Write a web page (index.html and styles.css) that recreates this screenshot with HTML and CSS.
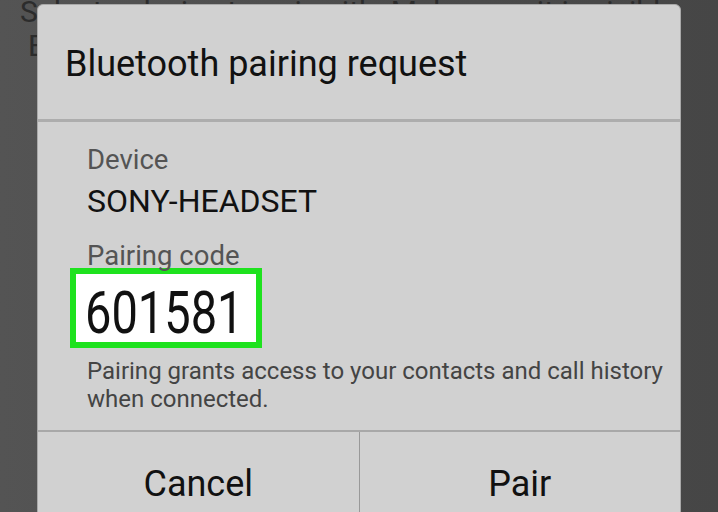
FILE: index.html
```html
<!DOCTYPE html>
<html>
<head>
<meta charset="utf-8">
<link rel="stylesheet" href="styles.css">
</head>
<body>
<div class="screen">
  <div class="backdrop-text">
    <p>Select a device to pair with. Make sure it is visible</p>
    <p>Eligible devices nearby will appear below</p>
  </div>
  <div class="dialog">
    <div class="dialog-header">
      <h1 class="dialog-title">Bluetooth pairing request</h1>
    </div>
    <div class="dialog-body">
      <div class="field-label">Device</div>
      <div class="field-value">SONY-HEADSET</div>
      <div class="field-label code-label">Pairing code</div>
      <div class="code-box"><span class="code">601581</span></div>
      <p class="note">Pairing grants access to your contacts and call history when connected.</p>
    </div>
    <div class="dialog-actions">
      <div class="action">Cancel</div>
      <div class="action action-primary">Pair</div>
    </div>
  </div>
</div>
</body>
</html>
```

FILE: styles.css
```css
* { box-sizing: border-box; }
html, body { margin: 0; padding: 0; }
body {
  width: 718px;
  height: 512px;
  overflow: hidden;
  background: #4b4b4b;
  font-family: Roboto, "Noto Sans", sans-serif;
}
.screen {
  position: relative;
  width: 718px;
  height: 512px;
  overflow: hidden;
  background: linear-gradient(90deg, #545454 0%, #4c4c4c 50%, #464646 100%);
}
.backdrop-text {
  padding: 0 0 0 20px;
  color: #2c2c2c;
  font-size: 30px;
  line-height: 34px;
  margin-top: -5px;
}
.backdrop-text p { margin: 0; white-space: nowrap; }
.backdrop-text p + p { padding-left: 8px; }
.dialog {
  position: absolute;
  left: 37px;
  top: 4px;
  width: 644px;
  height: 560px;
  background: #d1d1d1;
  border: 1px solid #a9a9a9;
  border-radius: 6px;
  display: flex;
  flex-direction: column;
}
.dialog-header {
  height: 117px;
  flex: none;
  padding: 38px 0 0 27px;
  border-bottom: 3px solid #adadad;
}
.dialog-title {
  margin: 0;
  font-weight: 400;
  font-size: 36px;
  line-height: 42px;
  color: #111;
}
.dialog-body {
  flex: none;
  height: 310px;
  padding: 22px 0 0 49px;
  border-bottom: 2px solid #a8a8a8;
}
.field-label {
  font-size: 27.5px;
  line-height: 32px;
  color: #545454;
}
.field-value {
  font-size: 32px;
  line-height: 38px;
  margin-top: 6px;
  color: #111;
}
.code-label { margin-top: 20px; }
.code-box {
  margin: -4px 0 0 -17px;
  width: 192px;
  height: 80px;
  border: 6px solid #1ee21e;
  background: #fff;
  padding: 15px 0 0 9px;
}
.code {
  display: inline-block;
  font-size: 47px;
  line-height: 47px;
  color: #111;
  transform: scaleY(1.25);
}
.note {
  margin: 9px 0 0;
  font-size: 24px;
  line-height: 28px;
  color: #444;
}
.dialog-actions {
  flex: 1;
  display: flex;
}
.action {
  flex: 1;
  text-align: center;
  font-size: 36px;
  line-height: 42px;
  color: #111;
  padding-top: 31px;
}
.action-primary { border-left: 1px solid #999; }
```
